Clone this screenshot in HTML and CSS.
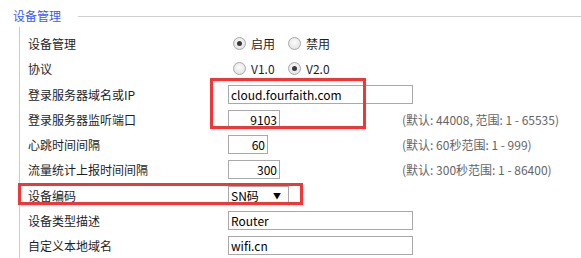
FILE: index.html
```html
<!DOCTYPE html>
<html lang="zh-CN">
<head>
<meta charset="utf-8">
<title>设备管理</title>
<link rel="stylesheet" href="styles.css">
</head>
<body>
<div class="panel">
  <div class="legend-row">
    <span class="legend">设备管理</span>
    <span class="legend-line"></span>
  </div>
  <div class="fields">
    <div class="row">
      <div class="label">设备管理</div>
      <div class="ctrl radios">
        <span class="opt"><span class="radio checked"></span><span>启用</span></span>
        <span class="opt"><span class="radio"></span><span>禁用</span></span>
      </div>
    </div>
    <div class="row">
      <div class="label">协议</div>
      <div class="ctrl radios">
        <span class="opt"><span class="radio"></span><span>V1.0</span></span>
        <span class="opt"><span class="radio checked"></span><span>V2.0</span></span>
      </div>
    </div>
    <div class="row">
      <div class="label">登录服务器域名或IP</div>
      <div class="ctrl"><div class="input w-long">cloud.fourfaith.com</div></div>
    </div>
    <div class="row">
      <div class="label">登录服务器监听端口</div>
      <div class="ctrl"><div class="input num w-52">9103</div></div>
      <div class="hint">(默认: 44008, 范围: 1 - 65535)</div>
    </div>
    <div class="row">
      <div class="label">心跳时间间隔</div>
      <div class="ctrl"><div class="input num w-40">60</div></div>
      <div class="hint">(默认: 60秒范围: 1 - 999)</div>
    </div>
    <div class="row">
      <div class="label">流量统计上报时间间隔</div>
      <div class="ctrl"><div class="input num w-52">300</div></div>
      <div class="hint">(默认: 300秒范围: 1 - 86400)</div>
    </div>
    <div class="row">
      <div class="label">设备编码</div>
      <div class="ctrl"><div class="select"><span>SN码</span><span class="arrow">▼</span></div></div>
    </div>
    <div class="row">
      <div class="label">设备类型描述</div>
      <div class="ctrl"><div class="input w-long">Router</div></div>
    </div>
    <div class="row">
      <div class="label">自定义本地域名</div>
      <div class="ctrl"><div class="input w-long">wifi.cn</div></div>
    </div>
  </div>
  <div class="mark mark-server"></div>
  <div class="mark mark-code"></div>
</div>
</body>
</html>
```
FILE: styles.css
```css
html, body {
  margin: 0;
  padding: 0;
  background: #ffffff;
}
body {
  font-family: "Noto Sans CJK SC", "Noto Sans", sans-serif;
  font-size: 12px;
  color: #1e1e1e;
  width: 581px;
  height: 258px;
  overflow: hidden;
}
.panel {
  position: relative;
  height: 258px;
}
.legend-row {
  display: flex;
  align-items: center;
  height: 27px;
  padding-left: 13px;
  padding-top: 5px;
  box-sizing: border-box;
}
.legend {
  color: #3a5bf0;
  font-size: 12px;
  line-height: 16px;
  width: 65px;
}
.legend-line {
  flex: 1;
  height: 1px;
  background: #cfcfcf;
}
.fields {
  margin-left: 19px;
  border-left: 1px solid #cccccc;
  height: 231px;
  padding-top: 4px;
  box-sizing: border-box;
  display: flex;
  flex-direction: column;
}
.row {
  display: flex;
  align-items: center;
  height: 25.25px;
  flex: none;
}
.label {
  width: 208px;
  padding-left: 8px;
  box-sizing: border-box;
  flex: none;
}
.ctrl {
  width: 174px;
  flex: none;
  display: flex;
  align-items: center;
}
.hint {
  color: #666666;
}
.radios {
  padding-left: 5px;
}
.opt {
  display: inline-flex;
  align-items: center;
  width: 55px;
}
.radio {
  width: 13px;
  height: 13px;
  box-sizing: border-box;
  border-radius: 50%;
  border: 1px solid #a8a8a8;
  background: radial-gradient(circle at 50% 40%, #fbfbfb 0%, #e6e6e6 70%, #d8d8d8 100%);
  margin-right: 5px;
  position: relative;
  flex: none;
}
.radio.checked::after {
  content: "";
  position: absolute;
  left: 3px;
  top: 3px;
  width: 5px;
  height: 5px;
  border-radius: 50%;
  background: #3a3a3a;
}
.input {
  height: 19px;
  box-sizing: border-box;
  border: 1px solid #a9a9a9;
  padding: 0 2px;
  line-height: 17px;
  color: #000;
  white-space: nowrap;
  flex: none;
}
.input.num {
  text-align: right;
  padding-right: 2px;
}
.w-long { width: 185px; }
.w-52 { width: 52px; }
.w-40 { width: 40px; }
.select {
  width: 61px;
  height: 19px;
  box-sizing: border-box;
  border: 1px solid #a9a9a9;
  display: flex;
  align-items: center;
  justify-content: space-between;
  padding: 0 7px 0 2px;
  color: #000;
  line-height: 17px;
}
.arrow {
  font-size: 8px;
}
.mark {
  position: absolute;
  border: 3px solid #ef3737;
  box-sizing: border-box;
}
.mark-server {
  left: 210px;
  top: 78px;
  width: 156px;
  height: 51px;
}
.mark-code {
  left: 18px;
  top: 183px;
  width: 285px;
  height: 22px;
}
```
